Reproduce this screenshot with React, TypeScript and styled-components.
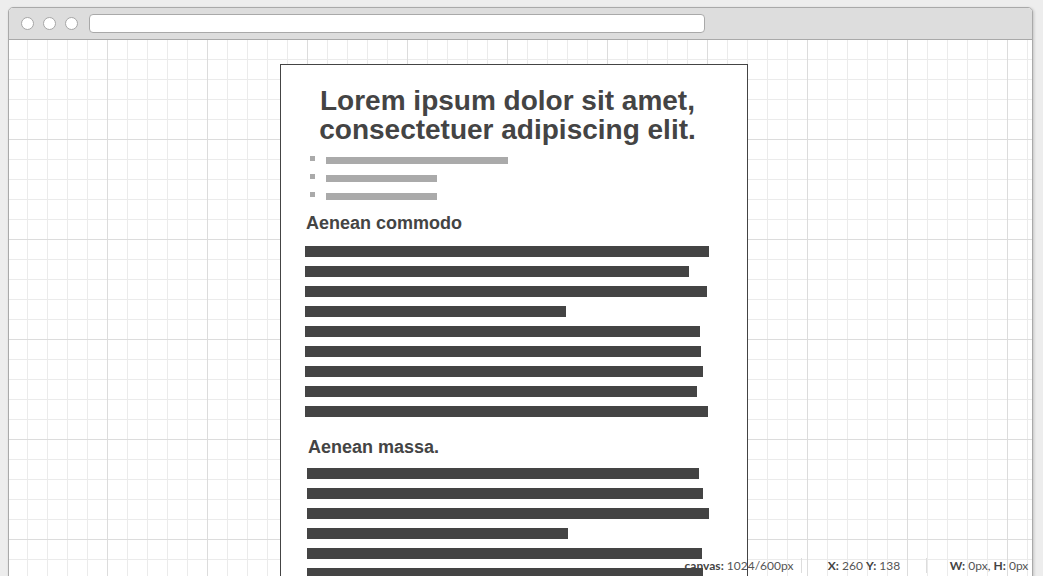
import styled, { createGlobalStyle } from 'styled-components'

const GlobalStyle = createGlobalStyle`
  html, body {
    margin: 0;
    padding: 0;
    overflow: hidden;
    background: #ededed;
  }
  #root {
    height: 576px;
  }
`

const Page = styled.div`
  position: relative;
  height: 576px;
  overflow: hidden;
  padding: 7px 0 0 8px;
  box-sizing: border-box;
`

const Window = styled.div`
  width: 1025px;
  height: 620px;
  box-sizing: border-box;
  border: 1px solid #a9a9a9;
  border-radius: 5px 5px 0 0;
  box-shadow: 1px 1px 3px rgba(0, 0, 0, 0.18);
  background: #fff;
  display: flex;
  flex-direction: column;
  overflow: hidden;
`

const TitleBar = styled.div`
  height: 31px;
  flex-shrink: 0;
  background: #dddddd;
  border-bottom: 1px solid #a9a9a9;
  display: flex;
  align-items: center;
  gap: 9px;
  padding-left: 12px;
`

const Dot = styled.span`
  width: 13px;
  height: 13px;
  box-sizing: border-box;
  border: 1px solid #a6a6a6;
  border-radius: 50%;
  background: #fff;
`

const Address = styled.div`
  width: 616px;
  height: 19px;
  box-sizing: border-box;
  margin-left: 2px;
  border: 1px solid #a9a9a9;
  border-radius: 4px;
  background: #fff;
`

const Canvas = styled.div`
  flex: 1;
  padding: 24px 0 0 271px;
  background-color: #fff;
  background-image:
    linear-gradient(to right, #dcdcdc 1px, transparent 1px),
    linear-gradient(to bottom, #dcdcdc 1px, transparent 1px),
    linear-gradient(to right, #ebebeb 1px, transparent 1px),
    linear-gradient(to bottom, #ebebeb 1px, transparent 1px);
  background-size: 100px 100px, 100px 100px, 20px 20px, 20px 20px;
  background-position: 98px 0, 0 99px, 18px 0, 0 19px;
`

const Doc = styled.div`
  width: 468px;
  height: 580px;
  box-sizing: border-box;
  border: 1px solid #444;
  background: #fff;
  padding: 21px 37px 0 24px;
  color: #444;
  font-family: "Liberation Sans", Arial, sans-serif;
`

const Title = styled.h1`
  margin: 0;
  font-size: 28px;
  line-height: 29px;
  font-weight: 700;
  text-align: center;
`

const List = styled.ul`
  list-style: none;
  margin: 7px 0 0;
  padding: 0;
`

const Item = styled.li`
  height: 18px;
  display: flex;
  align-items: flex-start;
`

const Bullet = styled.span`
  width: 5px;
  height: 5px;
  margin: 5px 0 0 5px;
  background: #aaa;
`

const LightBar = styled.span<{ $w: number }>`
  width: ${p => p.$w}px;
  height: 7px;
  margin: 6px 0 0 11px;
  background: #aaa;
`

const Section = styled.section<{ $top: number; $indent: number }>`
  margin-top: ${p => p.$top}px;
  padding-left: ${p => p.$indent}px;
`

const Heading = styled.h2<{ $space: number }>`
  margin: 0 0 ${p => p.$space}px 1px;
  font-size: 18px;
  line-height: 22px;
  font-weight: 700;
`

const Lines = styled.div`
  display: flex;
  flex-direction: column;
  gap: 9px;
`

const Line = styled.div<{ $w: number }>`
  width: ${p => p.$w}px;
  height: 11px;
  background: #444;
`

const Status = styled.div`
  position: absolute;
  right: -8px;
  bottom: 3px;
  display: flex;
  font-family: Lato, "Liberation Sans", sans-serif;
  font-size: 12px;
  line-height: 15px;
  color: #555;
`

const StatusItem = styled.div<{ $sep?: boolean }>`
  width: 124px;
  height: 15px;
  text-align: center;
  white-space: nowrap;
  border-left: 1px solid ${p => (p.$sep ? '#dddddd' : 'transparent')};
  b {
    font-weight: 700;
    color: #444;
  }
`

const bullets = [182, 111, 111]
const first = [404, 384, 402, 261, 395, 396, 398, 392, 403]
const second = [392, 396, 402, 261, 395, 396]

export default function App() {
  return (
    <Page>
      <GlobalStyle />
      <Window>
        <TitleBar>
          <Dot />
          <Dot />
          <Dot />
          <Address />
        </TitleBar>
        <Canvas>
          <Doc>
            <Title>
              Lorem ipsum dolor sit amet,
              <br />
              consectetuer adipiscing elit.
            </Title>
            <List>
              {bullets.map((w, i) => (
                <Item key={i}>
                  <Bullet />
                  <LightBar $w={w} />
                </Item>
              ))}
            </List>
            <Section $top={7} $indent={0}>
              <Heading $space={12}>Aenean commodo</Heading>
              <Lines>
                {first.map((w, i) => (
                  <Line key={i} $w={w} />
                ))}
              </Lines>
            </Section>
            <Section $top={19} $indent={2}>
              <Heading $space={10}>Aenean massa.</Heading>
              <Lines>
                {second.map((w, i) => (
                  <Line key={i} $w={w} />
                ))}
              </Lines>
            </Section>
          </Doc>
        </Canvas>
      </Window>
      <Status>
        <StatusItem>
          <b>canvas:</b> 1024/600px
        </StatusItem>
        <StatusItem $sep>
          <b>X:</b> 260 <b>Y:</b> 138
        </StatusItem>
        <StatusItem $sep>
          <b>W:</b> 0px, <b>H:</b> 0px
        </StatusItem>
      </Status>
    </Page>
  )
}
